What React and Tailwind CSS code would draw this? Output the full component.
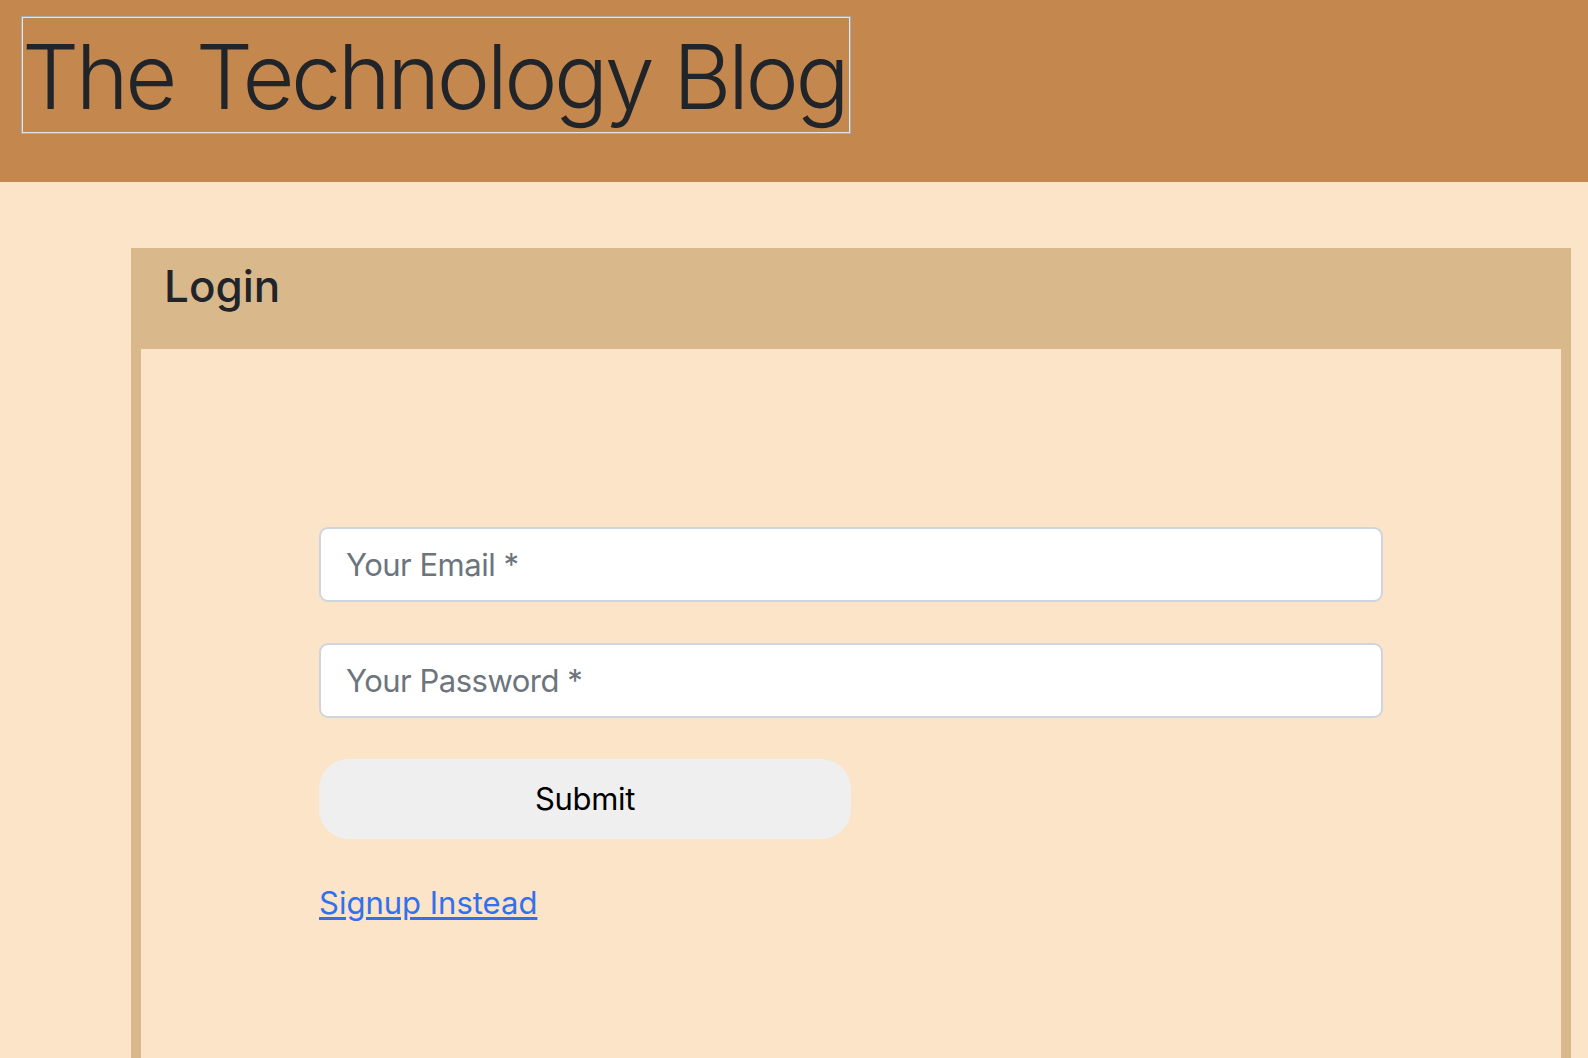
export default function App() {
  return (
    <div className="min-h-screen bg-[#fbe4c8] font-['Inter','Liberation_Sans',sans-serif] text-[#212529]">
      <header className="h-[182px] bg-[#c4884f] pl-[21px] pt-[16px]">
        <h1 className="inline-block border border-[#a6abb0] pr-[4px] pt-[4px] text-[90px] font-light leading-[112px] tracking-[-3.5px] ring-1 ring-inset ring-[#e3e6e9]">
          The Technology Blog
        </h1>
      </header>

      <main className="pt-[66px]">
        <div className="ml-[131px] mr-[17px] border-[10px] border-b-0 border-[#d9b98c]">
          <div className="h-[91px] bg-[#d9b98c] pl-[23px] pt-[2px]">
            <h2 className="text-[44px] font-medium leading-[52px]">Login</h2>
          </div>

          <div className="min-h-[760px] bg-[#fbe4c8] px-[178px] pt-[178px]">
            <form className="flex flex-col gap-[41px]">
              <input
                type="email"
                placeholder="Your Email *"
                className="h-[75px] w-full rounded-[9px] border-2 border-[#cfd5dc] bg-white pl-[25px] text-[31px] tracking-[-0.5px] text-[#495057] outline-none placeholder:text-[#6c757d]"
              />
              <input
                type="password"
                placeholder="Your Password *"
                className="h-[75px] w-full rounded-[9px] border-2 border-[#cfd5dc] bg-white pl-[25px] text-[31px] tracking-[-0.5px] text-[#495057] outline-none placeholder:text-[#6c757d]"
              />
              <button
                type="button"
                className="h-[80px] w-[532px] rounded-[30px] bg-[#efefef] text-[31px] tracking-[-0.3px] text-black"
              >
                Submit
              </button>
            </form>
            <a
              href="#"
              className="mt-[44px] inline-block text-[31px] leading-[40px] text-[#3270ee] underline underline-offset-[3px]"
            >
              Signup Instead
            </a>
          </div>
        </div>
      </main>
    </div>
  );
}
